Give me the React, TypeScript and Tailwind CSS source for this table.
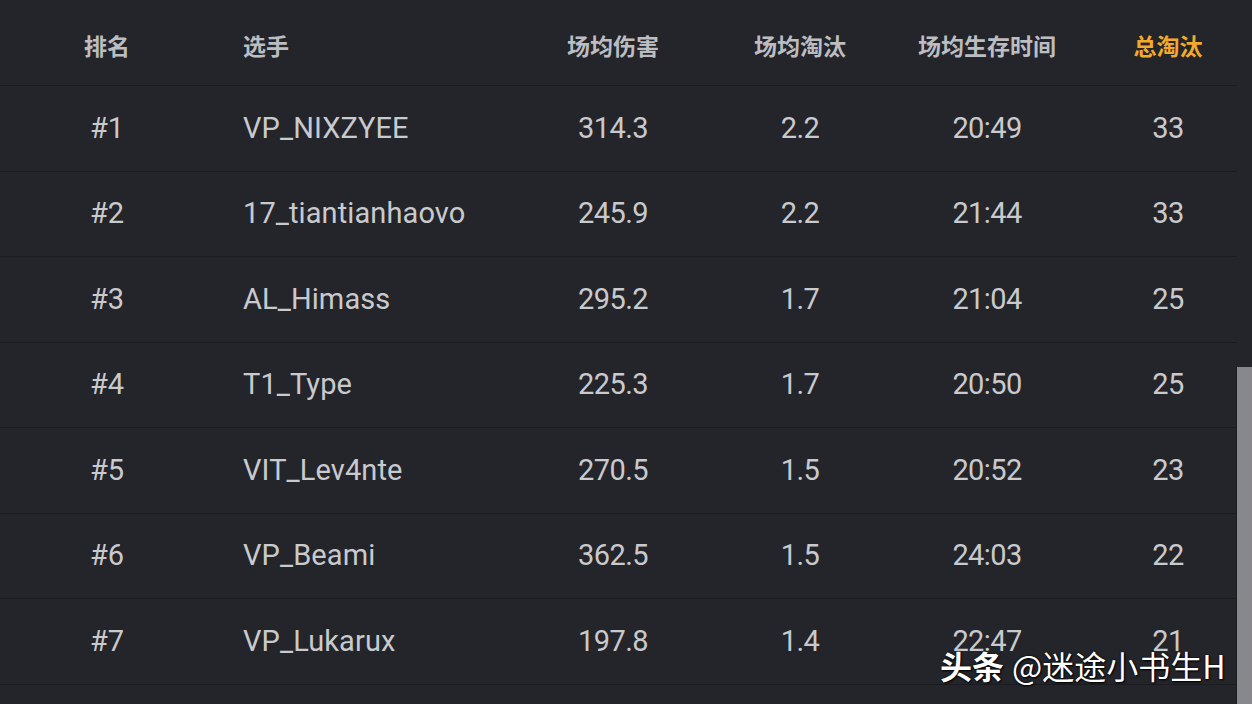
import React from "react";

const rows = [
  ["#1", "VP_NIXZYEE", "314.3", "2.2", "20:49", "33"],
  ["#2", "17_tiantianhaovo", "245.9", "2.2", "21:44", "33"],
  ["#3", "AL_Himass", "295.2", "1.7", "21:04", "25"],
  ["#4", "T1_Type", "225.3", "1.7", "20:50", "25"],
  ["#5", "VIT_Lev4nte", "270.5", "1.5", "20:52", "23"],
  ["#6", "VP_Beami", "362.5", "1.5", "24:03", "22"],
  ["#7", "VP_Lukarux", "197.8", "1.4", "22:47", "21"],
  ["", "", "", "", "", ""],
];

export default function App() {
  return (
    <div className="relative h-[704px] w-[1252px] overflow-hidden bg-[#24252a]">
      <div className="w-[1237px] overflow-hidden">
        <div className="flex h-[86px] items-center border-b border-[#1b1c20] pt-[6px] font-['Noto_Sans_CJK_SC',sans-serif] text-[23px] font-bold text-[#bcbdc1]">
          <div className="w-[214px] shrink-0 text-center">排名</div>
          <div className="w-[319px] shrink-0 pl-[29px]">选手</div>
          <div className="w-[160px] shrink-0 text-center">场均伤害</div>
          <div className="w-[214px] shrink-0 text-center">场均淘汰</div>
          <div className="w-[160px] shrink-0 text-center">场均生存时间</div>
          <div className="w-[202px] shrink-0 text-center text-[#f2aa2c]">总淘汰</div>
        </div>
        {rows.map((r, i) => (
          <div
            key={i}
            className="flex h-[85.57px] items-center border-b border-[#1b1c20] font-['Roboto',sans-serif] text-[29px] text-[#c9cacd]"
          >
            <div className="w-[214px] shrink-0 text-center">{r[0]}</div>
            <div className="w-[319px] shrink-0 pl-[29px] tracking-[0.1px]">{r[1]}</div>
            <div className="w-[160px] shrink-0 text-center tracking-[-0.6px]">{r[2]}</div>
            <div className="w-[214px] shrink-0 text-center tracking-[-0.6px]">{r[3]}</div>
            <div className="w-[160px] shrink-0 text-center tracking-[-0.6px]">{r[4]}</div>
            <div className="w-[202px] shrink-0 text-center tracking-[-0.6px]">{r[5]}</div>
          </div>
        ))}
      </div>
      <div className="absolute bottom-0 right-0 top-[367px] w-[16px] border-l border-[#1b1c20] bg-[#88878c]" />
      <div className="absolute left-[940px] top-[649px] flex items-baseline whitespace-nowrap font-['Noto_Sans_CJK_SC',sans-serif] text-[32px] leading-none text-white [text-shadow:0_0_2px_#000,1px_1px_2px_#000]">
        <span className="font-bold">头条</span>
        <span className="ml-[8px]">@迷途小书生H</span>
      </div>
    </div>
  );
}
